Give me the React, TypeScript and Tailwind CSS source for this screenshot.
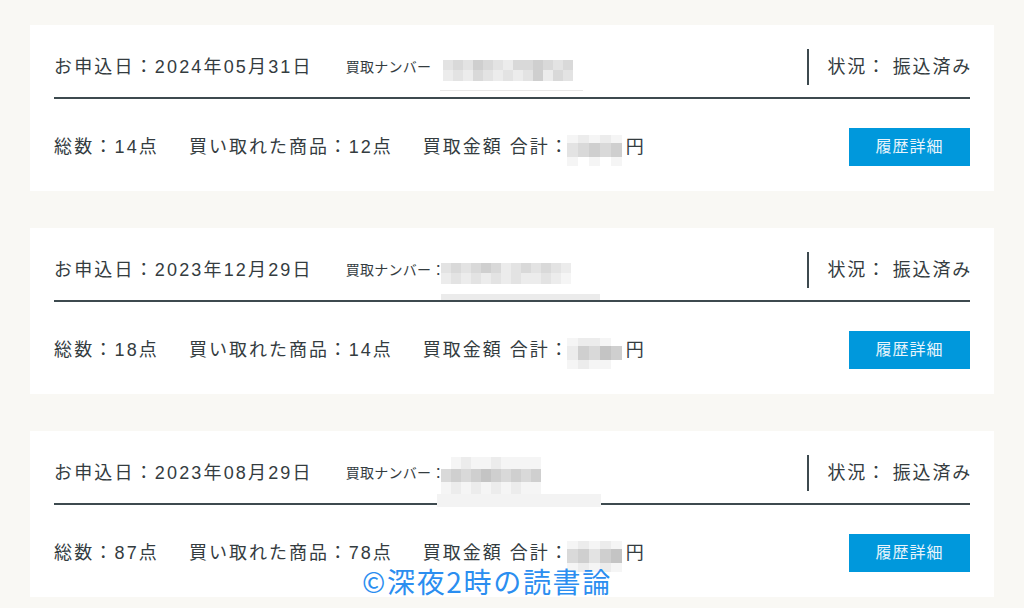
import React from "react";

type Row = { h: string; c: string };
type Extra = string | null;

const shade: Record<string, string> = {
  ".": "bg-transparent",
  "1": "bg-[#f5f5f5]",
  "2": "bg-[#ececec]",
  "3": "bg-[#e3e3e3]",
  "4": "bg-[#d9d9d9]",
  "5": "bg-[#cfcfcf]",
  "6": "bg-[#c4c4c4]",
};

function Pixels({ rows, cw, extra }: { rows: Row[]; cw: string; extra?: Extra }) {
  return (
    <span className="relative inline-flex flex-col">
      {rows.map((r, i) => (
        <span key={i} className={`flex ${r.h}`}>
          {r.c.split("").map((ch, j) => (
            <span key={j} className={`${cw} h-full ${shade[ch]}`} />
          ))}
        </span>
      ))}
      {extra ? <span className={`absolute ${extra}`} /> : null}
    </span>
  );
}

type Card = {
  date: string;
  colon: boolean;
  num: Row[];
  numExtra: Extra;
  total: string;
  bought: string;
  amount: Row[];
};

const cards: Card[] = [
  {
    date: "2024年05月31日",
    colon: false,
    num: [
      { h: "h-[10px]", c: "3435432445434" },
      { h: "h-[11px]", c: "2324323235243" },
    ],
    numExtra: "left-[-3px] top-[30px] w-[143px] h-px bg-[#e8e8e8]",
    total: "14",
    bought: "12",
    amount: [
      { h: "h-[8px]", c: "12121" },
      { h: "h-[14px]", c: "34545" },
      { h: "h-[9px]", c: "1.1.1" },
    ],
  },
  {
    date: "2023年12月29日",
    colon: true,
    num: [
      { h: "h-[10px]", c: "3434542343432" },
      { h: "h-[11px]", c: "2323232322321" },
    ],
    numExtra: "left-0 top-[31px] w-[159px] h-[6px] bg-[#ebebeb]",
    total: "18",
    bought: "14",
    amount: [
      { h: "h-[8px]", c: "1221." },
      { h: "h-[14px]", c: "25465" },
      { h: "h-[9px]", c: "1211." },
    ],
  },
  {
    date: "2023年08月29日",
    colon: true,
    num: [
      { h: "h-[12px]", c: ".121121111" },
      { h: "h-[13px]", c: "4545654545" },
      { h: "h-[12px]", c: "1212121211" },
    ],
    numExtra: "left-[-4px] top-[37px] w-[164px] h-[13px] bg-[#f3f3f3]",
    total: "87",
    bought: "78",
    amount: [
      { h: "h-[8px]", c: "12121" },
      { h: "h-[14px]", c: "45356" },
      { h: "h-[9px]", c: "12121" },
    ],
  },
];

function OrderCard({ c }: { c: Card }) {
  return (
    <div className="bg-white px-[24px] pt-[24px] pb-[26px] h-[166px]">
      <div className="flex h-[36px] items-center">
        <span className="text-[18px] tracking-[0.12em] leading-none">お申込日：{c.date}</span>
        <span className="ml-[33px] flex items-center">
          <span className="text-[14px] tracking-[0.02em] leading-none">
            買取ナンバー{c.colon ? "：" : ""}
          </span>
          <span className={c.colon ? "-ml-[5px]" : "ml-[12px]"}>
            <Pixels rows={c.num} cw="w-[10px]" extra={c.numExtra} />
          </span>
        </span>
        <span className="ml-auto h-[36px] w-[2px] bg-[#3d4a4f]" />
        <span className="ml-[18px] text-[18px] tracking-[0.1em] leading-none">状況：</span>
        <span className="ml-[6px] text-[18px] tracking-[0.1em] leading-none mr-[-2px]">振込済み</span>
      </div>
      <div className="mt-[12px] h-[2px] bg-[#3d4a4f]" />
      <div className="mt-[29px] flex h-[38px] items-center">
        <span className="text-[18px] tracking-[0.12em] leading-none">総数：{c.total}点</span>
        <span className="ml-[30px] text-[18px] tracking-[0.11em] leading-none">
          買い取れた商品：{c.bought}点
        </span>
        <span className="ml-[30px] flex items-center text-[18px] tracking-[0.11em] leading-none">
          <span>買取金額 合計：</span>
          <span className="-ml-[3px]">
            <Pixels rows={c.amount} cw="w-[11px]" />
          </span>
          <span className="ml-[4px]">円</span>
        </span>
        <button className="ml-auto h-[38px] w-[121px] bg-[#0098dc] text-[16px] tracking-[0.06em] text-[#e8f4fb] leading-none">
          履歴詳細
        </button>
      </div>
    </div>
  );
}

export default function App() {
  return (
    <div className="relative flex h-[608px] w-full flex-col gap-[37px] overflow-hidden bg-[#f9f8f4] px-[30px] pt-[25px] font-['Liberation_Sans','Noto_Sans_CJK_JP',sans-serif] text-[#343c3f]">
      {cards.map((c, i) => (
        <OrderCard key={i} c={c} />
      ))}
      <div className="absolute left-[362px] top-[567px] font-['Noto_Sans_CJK_JP',sans-serif] text-[28px] leading-none tracking-[0.06em] text-[#2b8ef0]">
        ©深夜2時の読書論
      </div>
    </div>
  );
}
